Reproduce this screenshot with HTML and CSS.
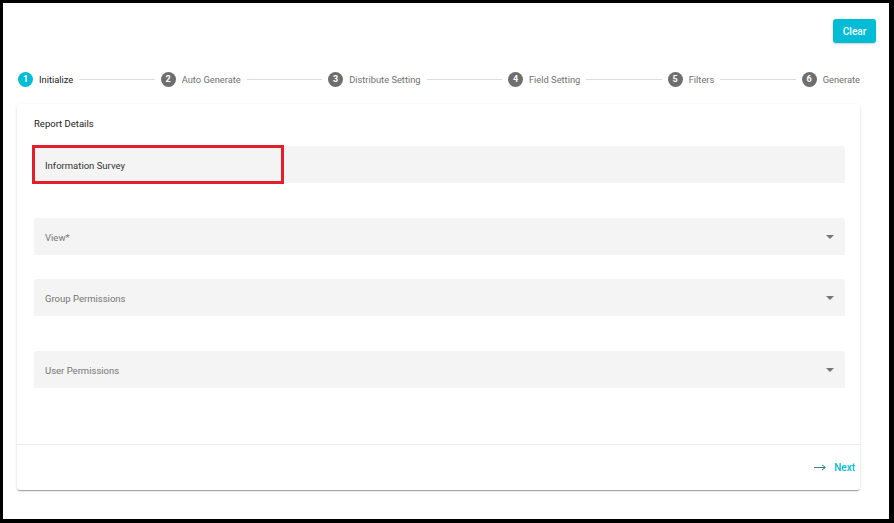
FILE: index.html
```html
<!DOCTYPE html>
<html lang="en">
<head>
    <meta charset="UTF-8">
    <meta name="viewport" content="width=device-width, initial-scale=1.0">
    <title>Report Wizard</title>
    <link rel="stylesheet" href="styles.css">
</head>
<body>

<div class="screen">
    <div class="toolbar">
        <button class="btn-clear">Clear</button>
    </div>

    <div class="content">
        <!-- Wizard steps -->
        <div class="stepper">
            <div class="step active"><span class="step-num">1</span><span class="step-label">Initialize</span></div>
            <div class="step-line"></div>
            <div class="step"><span class="step-num">2</span><span class="step-label">Auto Generate</span></div>
            <div class="step-line"></div>
            <div class="step"><span class="step-num">3</span><span class="step-label">Distribute Setting</span></div>
            <div class="step-line"></div>
            <div class="step"><span class="step-num">4</span><span class="step-label">Field Setting</span></div>
            <div class="step-line"></div>
            <div class="step"><span class="step-num">5</span><span class="step-label">Filters</span></div>
            <div class="step-line"></div>
            <div class="step"><span class="step-num">6</span><span class="step-label">Generate</span></div>
        </div>

        <div class="card">
            <div class="card-body">
                <div class="card-title">Report Details</div>

                <div class="field field-name">
                    <span class="field-value">Information Survey</span>
                    <div class="highlight"></div>
                </div>

                <div class="field field-view">
                    <span class="field-label">View*</span>
                    <span class="select-arrow"></span>
                </div>

                <div class="field field-group">
                    <span class="field-label">Group Permissions</span>
                    <span class="select-arrow"></span>
                </div>

                <div class="field field-user">
                    <span class="field-label">User Permissions</span>
                    <span class="select-arrow"></span>
                </div>
            </div>

            <div class="card-footer">
                <button class="btn-next">
                    <svg class="next-arrow" width="12" height="7" viewBox="0 0 12 7">
                        <path d="M0 3.5H11" stroke="#3a7f8c" stroke-width="1"/>
                        <path d="M8 1L11.5 3.5L8 6" fill="none" stroke="#3a7f8c" stroke-width="1"/>
                    </svg>
                    Next
                </button>
            </div>
        </div>
    </div>
</div>

</body>
</html>
```

FILE: styles.css
```css
body {
    margin: 0;
    background-color: #000000;
    font-family: Roboto, "Liberation Sans", Arial, sans-serif;
}

.screen {
    margin: 3px 5px 4px 3px;
    height: 516px;
    background-color: #ffffff;
    overflow: hidden;
}

.toolbar {
    display: flex;
    justify-content: flex-end;
    padding: 16px 13px 0 0;
}

.btn-clear {
    width: 43px;
    height: 24px;
    background-color: #00bcd4;
    color: #ffffff;
    border: none;
    border-radius: 3px;
    font-family: inherit;
    font-size: 10px;
    font-weight: 500;
    box-shadow: 0 1px 2px rgba(0, 0, 0, 0.2);
    padding: 0;
    cursor: pointer;
}

.content {
    padding: 0 29px 0 14px;
}

/* Stepper */
.stepper {
    display: flex;
    align-items: center;
    height: 24px;
    margin-top: 24px;
    padding-left: 1px;
}

.step {
    display: flex;
    align-items: center;
    flex-shrink: 0;
}

.step-num {
    width: 15px;
    height: 15px;
    border-radius: 50%;
    background-color: #6e6e6e;
    color: #ffffff;
    font-size: 9px;
    font-weight: 700;
    display: flex;
    align-items: center;
    justify-content: center;
}

.step.active .step-num {
    background-color: #00bcd4;
}

.step-label {
    margin-left: 6px;
    font-size: 9.3px;
    color: #707070;
}

.step.active .step-label {
    color: #212121;
}

.step-line {
    flex: 1;
    height: 1px;
    background-color: #dcdcdc;
    margin: 0 6px;
}

/* Card */
.card {
    margin-top: 13px;
    background-color: #ffffff;
    border-radius: 3px;
    box-shadow: 0 2px 1px -1px rgba(0, 0, 0, 0.2), 0 1px 1px 0 rgba(0, 0, 0, 0.14), 0 1px 3px 0 rgba(0, 0, 0, 0.12);
}

.card-body {
    padding: 13px 15px 56px 17px;
}

.card-title {
    font-size: 9.5px;
    line-height: 14px;
    color: #212121;
}

.field {
    position: relative;
    height: 37px;
    background-color: #f4f4f4;
    border-radius: 3px 3px 0 0;
    display: flex;
    align-items: center;
    padding: 0 11px;
    font-size: 9.5px;
}

.field-name {
    margin-top: 15px;
}

.field-view {
    margin-top: 35px;
}

.field-group {
    margin-top: 24px;
}

.field-user {
    margin-top: 35px;
}

.field-value {
    color: #333333;
    padding-top: 1px;
}

.field-label {
    color: #757575;
    flex: 1;
    padding-top: 2px;
}

.select-arrow {
    width: 0;
    height: 0;
    border-left: 4px solid transparent;
    border-right: 4px solid transparent;
    border-top: 4px solid #757575;
}

/* red annotation box */
.highlight {
    position: absolute;
    left: -2px;
    top: -1px;
    width: 252px;
    height: 39px;
    box-sizing: border-box;
    border: 3px solid #e3202a;
}

.card-footer {
    border-top: 1px solid #ebebeb;
    height: 45px;
    display: flex;
    align-items: center;
    justify-content: flex-end;
    padding-right: 5px;
}

.btn-next {
    background: none;
    border: none;
    padding: 0;
    color: #00bcd4;
    font-family: inherit;
    font-size: 10px;
    font-weight: 500;
    display: flex;
    align-items: center;
    cursor: pointer;
}

.next-arrow {
    margin-right: 8px;
}
```
